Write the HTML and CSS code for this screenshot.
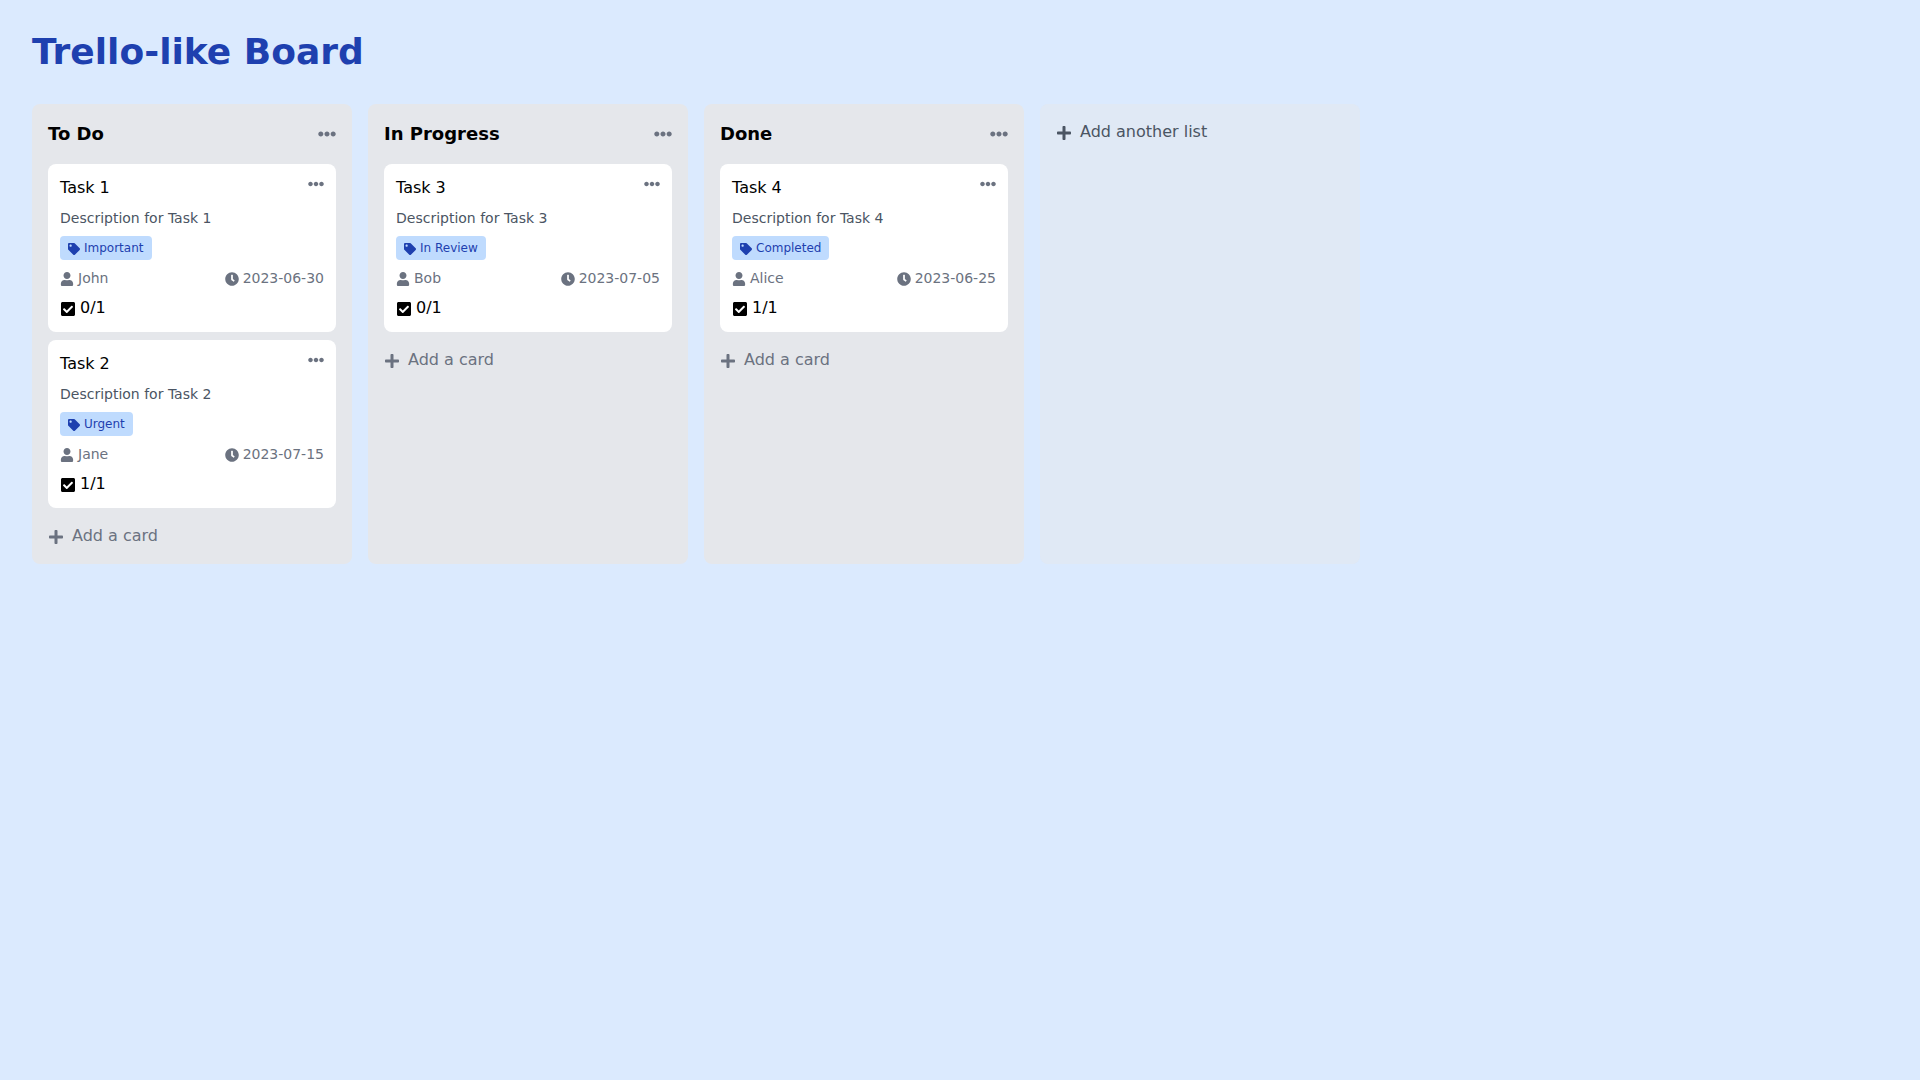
FILE: index.html
```html
<!DOCTYPE html>
<html lang="en">
<head>
    <meta charset="UTF-8">
    <meta name="viewport" content="width=device-width, initial-scale=1.0">
    <title>Trello-like Board</title>
    <link rel="stylesheet" href="styles.css">
</head>
<body>
    <svg class="sprite" aria-hidden="true">
        <symbol id="dots" viewBox="0 0 512 512"><path d="M328 256c0 39.8-32.2 72-72 72s-72-32.2-72-72 32.2-72 72-72 72 32.2 72 72zm104-72c-39.8 0-72 32.2-72 72s32.2 72 72 72 72-32.2 72-72-32.2-72-72-72zm-352 0c-39.8 0-72 32.2-72 72s32.2 72 72 72 72-32.2 72-72-32.2-72-72-72z"/></symbol>
        <symbol id="plus" viewBox="0 0 448 512"><path d="M416 208H272V64c0-17.67-14.33-32-32-32h-32c-17.67 0-32 14.33-32 32v144H32c-17.67 0-32 14.33-32 32v32c0 17.67 14.33 32 32 32h144v144c0 17.67 14.33 32 32 32h32c17.67 0 32-14.33 32-32V304h144c17.67 0 32-14.33 32-32v-32c0-17.67-14.33-32-32-32z"/></symbol>
        <symbol id="tag" viewBox="0 0 512 512"><path d="M0 252.118V48C0 21.49 21.49 0 48 0h204.118a48 48 0 0 1 33.941 14.059l211.882 211.882c18.745 18.745 18.745 49.137 0 67.882L293.823 497.941c-18.745 18.745-49.137 18.745-67.882 0L14.059 286.059A48 48 0 0 1 0 252.118zM112 64c-26.51 0-48 21.49-48 48s21.49 48 48 48 48-21.49 48-48-21.49-48-48-48z"/></symbol>
        <symbol id="user" viewBox="0 0 448 512"><path d="M224 256c70.7 0 128-57.3 128-128S294.7 0 224 0 96 57.3 96 128s57.3 128 128 128zm89.6 32h-16.7c-22.2 10.2-46.9 16-72.9 16s-50.6-5.8-72.9-16h-16.7C60.2 288 0 348.2 0 422.4V464c0 26.5 21.5 48 48 48h352c26.5 0 48-21.5 48-48v-41.6c0-74.2-60.2-134.4-134.4-134.4z"/></symbol>
        <symbol id="clock" viewBox="0 0 512 512"><path d="M256,8C119,8,8,119,8,256S119,504,256,504,504,393,504,256,393,8,256,8Zm92.49,313h0l-20,25a16,16,0,0,1-22.49,2.5h0l-67-49.72a40,40,0,0,1-15-31.23V112a16,16,0,0,1,16-16h32a16,16,0,0,1,16,16V256l58,42.5A16,16,0,0,1,348.49,321Z"/></symbol>
        <symbol id="check" viewBox="0 0 448 512"><path d="M400 480H48c-26.51 0-48-21.49-48-48V80c0-26.51 21.49-48 48-48h352c26.51 0 48 21.49 48 48v352c0 26.51-21.49 48-48 48zm-204.686-98.059l184-184c6.248-6.248 6.248-16.379 0-22.627l-22.627-22.627c-6.248-6.248-16.379-6.248-22.627 0L184 302.745l-70.059-70.059c-6.248-6.248-16.379-6.248-22.627 0l-22.627 22.627c-6.248 6.248-6.248 16.379 0 22.627l104 104c6.249 6.25 16.379 6.25 22.628.001z"/></symbol>
    </svg>

    <h1>Trello-like Board</h1>

    <main class="board">
        <section class="list">
            <div class="list-header">
                <h2>To Do</h2>
                <button class="menu" aria-label="List menu"><svg class="icon"><use href="#dots"/></svg></button>
            </div>
            <div class="cards">
                <article class="card">
                    <div class="card-header">
                        <h3>Task 1</h3>
                        <button class="menu" aria-label="Card menu"><svg class="icon"><use href="#dots"/></svg></button>
                    </div>
                    <p class="desc">Description for Task 1</p>
                    <div class="labels"><span class="label"><svg class="icon"><use href="#tag"/></svg>Important</span></div>
                    <div class="meta">
                        <span><svg class="icon"><use href="#user"/></svg>John</span>
                        <span><svg class="icon"><use href="#clock"/></svg>2023-06-30</span>
                    </div>
                    <div class="checklist"><svg class="icon"><use href="#check"/></svg>0/1</div>
                </article>
                <article class="card">
                    <div class="card-header">
                        <h3>Task 2</h3>
                        <button class="menu" aria-label="Card menu"><svg class="icon"><use href="#dots"/></svg></button>
                    </div>
                    <p class="desc">Description for Task 2</p>
                    <div class="labels"><span class="label"><svg class="icon"><use href="#tag"/></svg>Urgent</span></div>
                    <div class="meta">
                        <span><svg class="icon"><use href="#user"/></svg>Jane</span>
                        <span><svg class="icon"><use href="#clock"/></svg>2023-07-15</span>
                    </div>
                    <div class="checklist"><svg class="icon"><use href="#check"/></svg>1/1</div>
                </article>
            </div>
            <button class="add add-card"><svg class="icon"><use href="#plus"/></svg>Add a card</button>
        </section>

        <section class="list">
            <div class="list-header">
                <h2>In Progress</h2>
                <button class="menu" aria-label="List menu"><svg class="icon"><use href="#dots"/></svg></button>
            </div>
            <div class="cards">
                <article class="card">
                    <div class="card-header">
                        <h3>Task 3</h3>
                        <button class="menu" aria-label="Card menu"><svg class="icon"><use href="#dots"/></svg></button>
                    </div>
                    <p class="desc">Description for Task 3</p>
                    <div class="labels"><span class="label"><svg class="icon"><use href="#tag"/></svg>In Review</span></div>
                    <div class="meta">
                        <span><svg class="icon"><use href="#user"/></svg>Bob</span>
                        <span><svg class="icon"><use href="#clock"/></svg>2023-07-05</span>
                    </div>
                    <div class="checklist"><svg class="icon"><use href="#check"/></svg>0/1</div>
                </article>
            </div>
            <button class="add add-card"><svg class="icon"><use href="#plus"/></svg>Add a card</button>
        </section>

        <section class="list">
            <div class="list-header">
                <h2>Done</h2>
                <button class="menu" aria-label="List menu"><svg class="icon"><use href="#dots"/></svg></button>
            </div>
            <div class="cards">
                <article class="card">
                    <div class="card-header">
                        <h3>Task 4</h3>
                        <button class="menu" aria-label="Card menu"><svg class="icon"><use href="#dots"/></svg></button>
                    </div>
                    <p class="desc">Description for Task 4</p>
                    <div class="labels"><span class="label"><svg class="icon"><use href="#tag"/></svg>Completed</span></div>
                    <div class="meta">
                        <span><svg class="icon"><use href="#user"/></svg>Alice</span>
                        <span><svg class="icon"><use href="#clock"/></svg>2023-06-25</span>
                    </div>
                    <div class="checklist"><svg class="icon"><use href="#check"/></svg>1/1</div>
                </article>
            </div>
            <button class="add add-card"><svg class="icon"><use href="#plus"/></svg>Add a card</button>
        </section>

        <section class="list list-new">
            <button class="add"><svg class="icon"><use href="#plus"/></svg>Add another list</button>
        </section>
    </main>
</body>
</html>
```

FILE: styles.css
```css
* {
    margin: 0;
    padding: 0;
    box-sizing: border-box;
}
body {
    min-height: 100vh;
    padding: 32px;
    background: #dbeafe;
    font: 16px/24px 'DejaVu Sans', sans-serif;
    color: #000;
}
button {
    border: 0;
    background: none;
    font: inherit;
    color: #6b7280;
    cursor: pointer;
}
h1 {
    margin-bottom: 32px;
    font-size: 36px;
    line-height: 40px;
    color: #1e40af;
}
.sprite {
    display: none;
}
.icon {
    display: inline-block;
    width: 1em;
    height: 1em;
    margin-right: 4px;
    vertical-align: middle;
    fill: currentColor;
}
.menu .icon {
    display: block;
    margin: 0;
}

/* lists */
.board {
    display: flex;
    gap: 16px;
    overflow-x: auto;
}
.list {
    flex: 0 0 320px;
    padding: 16px;
    border-radius: 8px;
    background: #e5e7eb;
}
.list-header {
    display: flex;
    justify-content: space-between;
    align-items: center;
    margin-bottom: 16px;
    font-size: 18px;
    line-height: 28px;
}
h2 {
    font-size: 18px;
}
.list-new {
    background: rgba(229, 231, 235, .5);
}
.add {
    display: block;
    width: 100%;
    text-align: left;
}
.add .icon {
    margin-right: 8px;
}
.add-card {
    margin-top: 16px;
}
.list-new .add {
    color: #4b5563;
}

/* cards */
.cards {
    display: flex;
    flex-direction: column;
    gap: 8px;
}
.card {
    display: flex;
    flex-direction: column;
    gap: 8px;
    padding: 12px;
    border-radius: 8px;
    background: #fff;
}
.card-header {
    display: flex;
    justify-content: space-between;
    align-items: flex-start;
}
h3 {
    font-size: 16px;
    font-weight: normal;
}
.desc {
    font-size: 14px;
    line-height: 20px;
    color: #4b5563;
}
.labels {
    display: flex;
    gap: 4px;
}
.label {
    padding: 4px 8px;
    border-radius: 4px;
    background: #bfdbfe;
    font-size: 12px;
    line-height: 16px;
    color: #1e40af;
}
.meta {
    display: flex;
    justify-content: space-between;
    font-size: 14px;
    line-height: 20px;
    color: #6b7280;
}
```
